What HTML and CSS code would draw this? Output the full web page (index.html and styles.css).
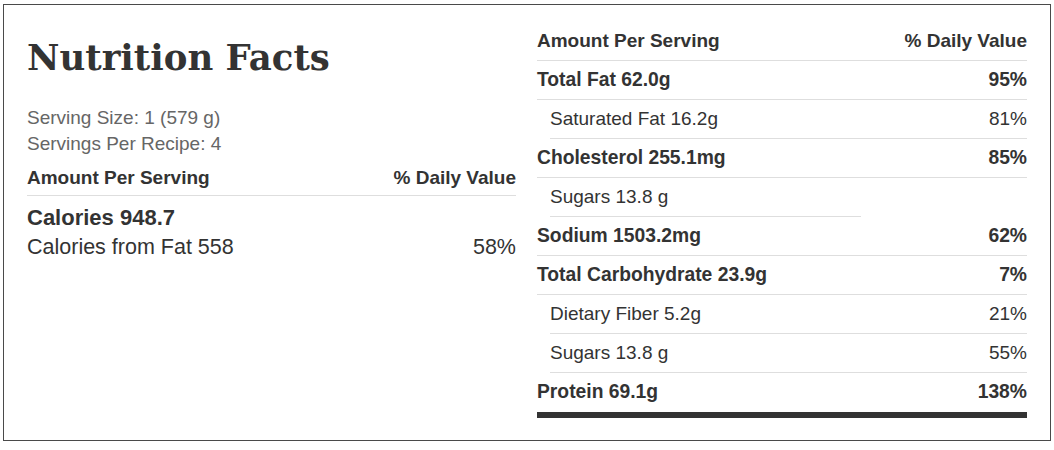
FILE: index.html
```html
<!DOCTYPE html>
<html lang="en">
<head>
<meta charset="utf-8">
<title>Nutrition Facts</title>
<link rel="stylesheet" href="styles.css">
</head>
<body>
<div class="label">
  <div class="col left">
    <h1 class="title">Nutrition Facts</h1>
    <div class="serving">
      <div>Serving Size: 1 (579 g)</div>
      <div>Servings Per Recipe: 4</div>
    </div>
    <div class="head left-head"><span>Amount Per Serving</span><span>% Daily Value</span></div>
    <div class="cal">Calories 948.7</div>
    <div class="calfat"><span>Calories from Fat 558</span><span>58%</span></div>
  </div>
  <div class="col right">
    <div class="head right-head"><span>Amount Per Serving</span><span>% Daily Value</span></div>
    <div class="row bold"><span>Total Fat 62.0g</span><span>95%</span></div>
    <div class="row sub"><span>Saturated Fat 16.2g</span><span>81%</span></div>
    <div class="row bold"><span>Cholesterol 255.1mg</span><span>85%</span></div>
    <div class="row sub short"><span>Sugars 13.8 g</span></div>
    <div class="row bold"><span>Sodium 1503.2mg</span><span>62%</span></div>
    <div class="row bold"><span>Total Carbohydrate 23.9g</span><span>7%</span></div>
    <div class="row sub"><span>Dietary Fiber 5.2g</span><span>21%</span></div>
    <div class="row sub"><span>Sugars 13.8 g</span><span>55%</span></div>
    <div class="row bold last"><span>Protein 69.1g</span><span>138%</span></div>
    <div class="bar"></div>
  </div>
</div>
</body>
</html>
```

FILE: styles.css
```css
html, body {
  margin: 0;
  padding: 0;
  background: #fff;
}

body {
  font-family: "Liberation Sans", Arial, sans-serif;
  color: #333;
}

.label {
  box-sizing: border-box;
  margin: 4px 0 0 3px;
  width: 1048px;
  height: 437px;
  border: 1px solid #4a4a4a;
  padding: 0 22px 0 23px;
  display: grid;
  grid-template-columns: 489px 490px;
  column-gap: 21px;
  align-items: start;
}

.col {
  display: flex;
  flex-direction: column;
}

.title {
  margin: 32px 0 0;
  font-family: "DejaVu Serif", "Liberation Serif", serif;
  font-weight: bold;
  font-size: 35.5px;
  line-height: 42px;
  color: #333;
}

.serving {
  margin-top: 26px;
  font-size: 19px;
  line-height: 26px;
  color: #666;
}

.head {
  display: flex;
  justify-content: space-between;
  font-weight: bold;
  font-size: 19px;
  line-height: 22px;
  border-bottom: 1px solid #dedede;
}

.left-head {
  margin-top: 10px;
  padding-bottom: 6px;
}

.right {
  padding-top: 25px;
}

.right-head {
  padding-bottom: 8px;
}

.cal {
  padding-top: 10px;
  font-weight: bold;
  font-size: 22px;
  line-height: 24px;
}

.calfat {
  margin-top: 4px;
  display: flex;
  justify-content: space-between;
  font-size: 21.5px;
  line-height: 26px;
}

.row {
  display: flex;
  justify-content: space-between;
  padding: 8px 0 8px;
  line-height: 22px;
  border-bottom: 1px solid #dedede;
}

.row.bold {
  font-weight: bold;
  font-size: 19.3px;
}

.row.sub {
  margin-left: 13px;
  font-size: 19px;
}

.row.short {
  width: 311px;
}

.row.last {
  border-bottom: none;
  padding-bottom: 9px;
}

.bar {
  height: 6px;
  background: #333;
}
```
